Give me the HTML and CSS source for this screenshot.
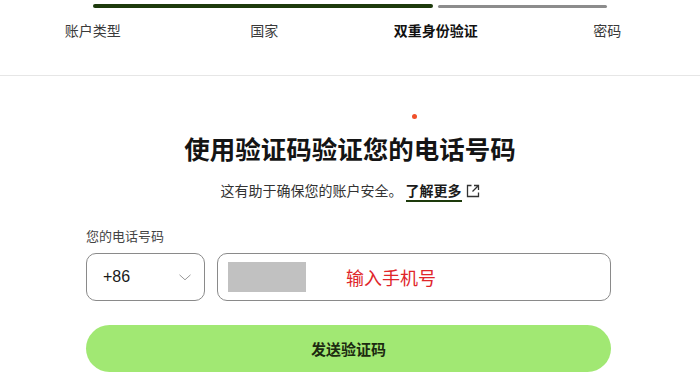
FILE: index.html
```html
<!DOCTYPE html>
<html lang="zh-CN">
<head>
<meta charset="utf-8">
<title>双重身份验证</title>
<link rel="stylesheet" href="styles.css">
</head>
<body>
<header class="stepper">
  <div class="track">
    <span class="bar bar-done"></span>
    <span class="bar bar-todo"></span>
  </div>
  <ol class="steps">
    <li class="step">账户类型</li>
    <li class="step">国家</li>
    <li class="step step-active">双重身份验证</li>
    <li class="step">密码</li>
  </ol>
</header>
<main class="content">
  <span class="dot"></span>
  <h1 class="title">使用验证码验证您的电话号码</h1>
  <p class="subtitle">这有助于确保您的账户安全。 <a class="learn" href="#">了解更多</a><svg class="ext" width="14" height="14" viewBox="0 0 14 14" fill="none" stroke="#333" stroke-width="1.3"><path d="M5.5 1.5H1.5v11h11V8.5"/><path d="M8 1.5h4.5V6M12.5 1.5L6.5 7.5"/></svg></p>
  <form class="form">
    <label class="field-label">您的电话号码</label>
    <div class="phone-row">
      <div class="select">
        <span class="code">+86</span>
        <svg class="chev" width="12" height="7" viewBox="0 0 12 7" fill="none" stroke="#999" stroke-width="1"><polyline points="0.5,0.8 6,5.8 11.5,0.8"/></svg>
      </div>
      <div class="input">
        <span class="mask"></span>
        <span class="hint">输入手机号</span>
      </div>
    </div>
    <button class="send" type="button">发送验证码</button>
  </form>
</main>
</body>
</html>
```
FILE: styles.css
```css
* { box-sizing: border-box; }
html, body { margin: 0; padding: 0; background: #fff; }
body {
  font-family: "Noto Sans CJK SC", "Noto Sans", sans-serif;
  color: #1a1a1a;
  width: 700px;
  height: 378px;
  overflow: hidden;
}
.stepper {
  height: 76px;
  border-bottom: 1px solid #e6e6e6;
  padding: 4px 7px 0 7px;
}
.track {
  display: flex;
  align-items: flex-start;
  gap: 5px;
  margin: 0 86px;
  height: 4px;
}
.bar { display: block; border-radius: 2px; }
.bar-done { width: 340px; height: 4px; background: #1d3a0c; }
.bar-todo { flex: 1; height: 3px; background: #8c8c8c; margin-top: 0.5px; }
.steps {
  list-style: none;
  margin: 12px 0 0 0;
  padding: 0;
  display: grid;
  grid-template-columns: repeat(4, 1fr);
}
.step {
  text-align: center;
  font-size: 14px;
  line-height: 20px;
  color: #3a3a3a;
}
.step-active { font-weight: 700; color: #111; }
.content {
  position: relative;
  padding-top: 54px;
  text-align: center;
}
.dot {
  position: absolute;
  left: 412px;
  top: 38px;
  width: 5px;
  height: 5px;
  border-radius: 50%;
  background: #f0502a;
}
.title {
  margin: 0;
  font-size: 25.5px;
  line-height: 36px;
  font-weight: 700;
  color: #141414;
}
.subtitle {
  margin: 13px 0 0 0;
  font-size: 14px;
  line-height: 22px;
  color: #333;
}
.learn {
  font-weight: 700;
  color: #1a1a1a;
  text-decoration: none;
  border-bottom: 2px solid #1d3a0c;
}
.ext { margin-left: 4px; vertical-align: -2px; }
.form {
  width: 525px;
  margin: 26px 0 0 86px;
  text-align: left;
  display: flex;
  flex-direction: column;
}
.field-label {
  font-size: 13px;
  line-height: 18px;
  color: #444;
}
.phone-row {
  display: flex;
  gap: 12px;
  margin-top: 8px;
}
.select {
  width: 119px;
  height: 48px;
  border: 1px solid #8a8a8a;
  border-radius: 10px;
  display: flex;
  align-items: center;
  justify-content: space-between;
  padding: 0 13px 0 16px;
}
.code {
  font-family: "Liberation Sans", Arial, sans-serif;
  font-size: 16px;
  color: #1a1a1a;
}
.chev { margin-top: 1px; }
.input {
  flex: 1;
  height: 48px;
  border: 1px solid #8a8a8a;
  border-radius: 10px;
  display: flex;
  align-items: center;
  gap: 40px;
  padding-left: 10px;
}
.mask {
  width: 78px;
  height: 30px;
  background: #c1c1c1;
}
.hint {
  font-size: 18px;
  color: #e0262a;
}
.send {
  margin-top: 24px;
  height: 47px;
  border: none;
  border-radius: 24px;
  background: #a1e873;
  font-family: "Noto Sans CJK SC", "Noto Sans", sans-serif;
  font-size: 15px;
  font-weight: 700;
  color: #1c2a10;
}
```
